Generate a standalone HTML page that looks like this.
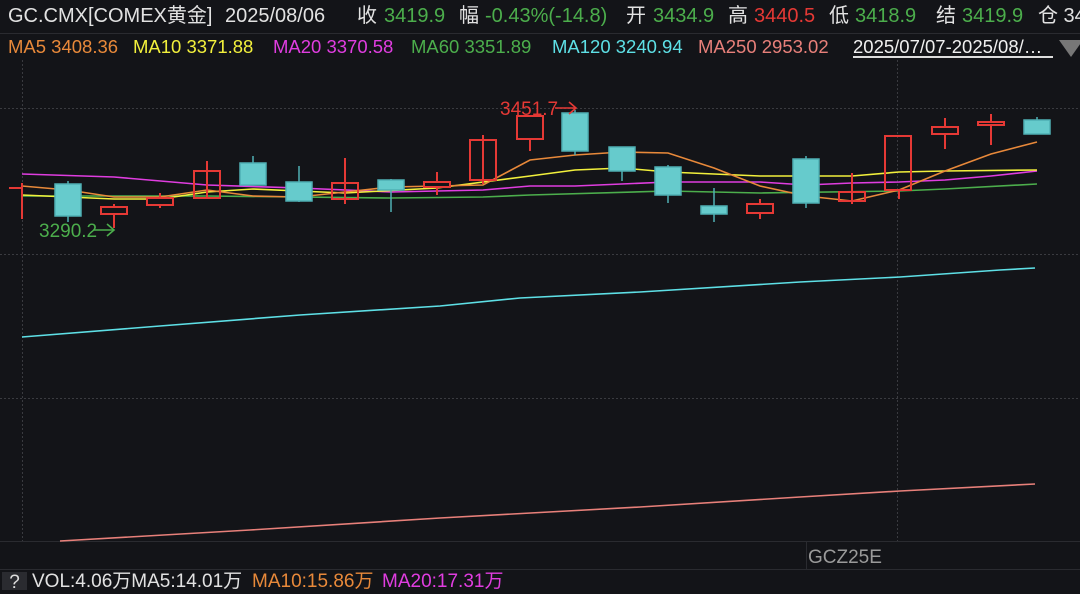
<!DOCTYPE html>
<html><head><meta charset="utf-8"><style>
html,body{margin:0;padding:0;background:#131418;width:1080px;height:588px;overflow:hidden;font-family:"Liberation Sans","Noto Sans CJK SC",sans-serif;}
.t{position:absolute;white-space:nowrap;font-size:20px;line-height:22px;}
.h{font-size:18.5px}
.w{color:#e2e2e2}.g{color:#4cae4c}.r{color:#e53935}.o{color:#e8893a}.y{color:#f2f03c}.m{color:#e03de0}.c{color:#5ee0e6}.s{color:#e8807a}
</style></head><body>
<div class="t w" style="left:8px;top:5px">GC.CMX[COMEX黄金]</div>
<div class="t w" style="left:225px;top:5px">2025/08/06</div>
<div class="t w" style="left:357px;top:5px">收</div><div class="t g" style="left:384px;top:5px">3419.9</div>
<div class="t w" style="left:459px;top:5px">幅</div><div class="t g" style="left:485px;top:5px">-0.43%(-14.8)</div>
<div class="t w" style="left:626px;top:5px">开</div><div class="t g" style="left:653px;top:5px">3434.9</div>
<div class="t w" style="left:728px;top:5px">高</div><div class="t r" style="left:754px;top:5px">3440.5</div>
<div class="t w" style="left:829px;top:5px">低</div><div class="t g" style="left:855px;top:5px">3418.9</div>
<div class="t w" style="left:936px;top:5px">结</div><div class="t g" style="left:962px;top:5px">3419.9</div>
<div class="t w" style="left:1038px;top:5px">仓 34</div>
<div style="position:absolute;left:0;top:33px;width:1080px;height:1px;background:#2a2b30"></div>
<div class="t h o" style="left:8px;top:36px">MA5 3408.36</div>
<div class="t h y" style="left:133px;top:36px">MA10 3371.88</div>
<div class="t h m" style="left:273px;top:36px">MA20 3370.58</div>
<div class="t h g" style="left:411px;top:36px">MA60 3351.89</div>
<div class="t h c" style="left:552px;top:36px">MA120 3240.94</div>
<div class="t h s" style="left:698px;top:36px">MA250 2953.02</div>
<div class="t h w" style="left:853px;top:36px;color:#f0f0f0">2025/07/07-2025/08/…</div>
<div style="position:absolute;left:853px;top:56px;width:200px;height:2px;background:#ddd"></div>
<div style="position:absolute;left:1059px;top:40px;width:0;height:0;border-left:12px solid transparent;border-right:12px solid transparent;border-top:17px solid #777"></div>

<svg style="position:absolute;left:0;top:0" width="1080" height="588">
<g stroke="#3a3b40" stroke-width="1" stroke-dasharray="2,2">
<line x1="0" y1="108.5" x2="1080" y2="108.5"/><line x1="0" y1="254.5" x2="1080" y2="254.5"/><line x1="0" y1="398.5" x2="1080" y2="398.5"/>
<line x1="22.5" y1="60" x2="22.5" y2="541"/><line x1="897.5" y1="60" x2="897.5" y2="541"/>
</g>
<line x1="0" y1="541.5" x2="1080" y2="541.5" stroke="#2a2b30"/>
<line x1="0" y1="569.5" x2="1080" y2="569.5" stroke="#2a2b30"/>
<line x1="806.5" y1="541" x2="806.5" y2="569" stroke="#2a2b30"/>
<g fill="none" stroke-width="1.6">
<polyline stroke="#5ee0e6" points="22,337 160,326 300,315 440,306 520,298 640,292 800,282 900,277 1000,270 1035,268"/>
<polyline stroke="#e8807a" points="60,541 250,530 440,518 640,507 800,497 900,491 1035,484"/>
<polyline stroke="#4cae4c" points="22,196 207,196 391,198 483,197 530,195 668,191 760,193 899,191 945,189 1037,184"/>
<polyline stroke="#e03de0" points="22,174 114,177 207,185 299,188 391,192 483,190 530,186 575,186 668,182 760,182 806,185 852,183 899,182 945,180 991,176 1037,171"/>
<polyline stroke="#f2f03c" points="22,195 114,199 160,199 207,192 253,189 345,193 437,188 530,176 575,170 622,168 668,172 714,174 760,176 806,176 852,176 899,172 945,171 1037,170"/>
<polyline stroke="#e8893a" points="22,186 68,190 114,197 160,197 207,190 253,196 299,197 345,192 391,187 437,186 483,185 530,160 575,155 622,152 668,153 714,168 760,186 806,196 852,201 899,190 945,171 991,154 1037,142"/>
</g>
<g stroke="#e53935" stroke-width="2" fill="none">
<line x1="9" y1="188" x2="22" y2="188"/><line x1="22" y1="183" x2="22" y2="219"/>
<line x1="114" y1="204" x2="114" y2="228"/><rect x="101" y="207" width="26" height="7" fill="#131418"/>
<line x1="160" y1="193" x2="160" y2="208"/><rect x="147" y="198" width="26" height="7" fill="#131418"/>
<line x1="207" y1="161" x2="207" y2="199"/><rect x="194" y="171" width="26" height="27" fill="none"/>
<line x1="345" y1="158" x2="345" y2="204"/><rect x="332" y="183" width="26" height="16"/>
<line x1="437" y1="172" x2="437" y2="195"/><rect x="424" y="182" width="26" height="5" fill="#131418"/>
<line x1="483" y1="135" x2="483" y2="184"/><rect x="470" y="140" width="26" height="40"/>
<line x1="530" y1="139" x2="530" y2="151"/><rect x="517" y="116" width="26" height="23"/>
<line x1="760" y1="199" x2="760" y2="219"/><rect x="747" y="204" width="26" height="9" fill="#131418"/>
<line x1="852" y1="173" x2="852" y2="204"/><rect x="839" y="192" width="26" height="9"/>
<line x1="899" y1="190" x2="899" y2="199"/><rect x="885" y="136" width="26" height="54"/>
<line x1="945" y1="118" x2="945" y2="149"/><rect x="932" y="127" width="26" height="7" fill="#131418"/>
<line x1="991" y1="114" x2="991" y2="145"/><rect x="978" y="122" width="26" height="3" fill="#131418"/>
</g>
<g stroke="#4fb0b4" stroke-width="1.5" fill="#66cbcc">
<line x1="68" y1="181" x2="68" y2="222"/><rect x="55" y="184" width="26" height="32"/>
<line x1="253" y1="156" x2="253" y2="185"/><rect x="240" y="163" width="26" height="22"/>
<line x1="299" y1="166" x2="299" y2="202"/><rect x="286" y="182" width="26" height="19"/>
<line x1="391" y1="179" x2="391" y2="212"/><rect x="378" y="180" width="26" height="10"/>
<line x1="575" y1="110" x2="575" y2="155"/><rect x="562" y="113" width="26" height="38"/>
<line x1="622" y1="147" x2="622" y2="181"/><rect x="609" y="147" width="26" height="24"/>
<line x1="668" y1="165" x2="668" y2="203"/><rect x="655" y="167" width="26" height="28"/>
<line x1="714" y1="188" x2="714" y2="222"/><rect x="701" y="206" width="26" height="8"/>
<line x1="806" y1="156" x2="806" y2="208"/><rect x="793" y="159" width="26" height="44"/>
<line x1="1037" y1="117" x2="1037" y2="121"/><rect x="1024" y="120" width="26" height="14"/>
</g>
<text x="500" y="115" fill="#e53935" font-size="19" font-family="Liberation Sans, sans-serif">3451.7</text>
<g stroke="#e53935" stroke-width="1.6" fill="none"><line x1="555" y1="108" x2="576" y2="108"/><polyline points="569,102 576,108 569,114"/></g>
<text x="39" y="237" fill="#4cae4c" font-size="19" font-family="Liberation Sans, sans-serif">3290.2</text>
<g stroke="#4cae4c" stroke-width="1.6" fill="none"><line x1="94" y1="230" x2="114" y2="230"/><polyline points="107,224 114,230 107,236"/></g>
<text x="808" y="563" fill="#9a9a9a" font-size="19" font-family="Liberation Sans, sans-serif">GCZ25E</text>
</svg>
<div style="position:absolute;left:2px;top:572px;width:25px;height:18px;background:#2a2b30;color:#ddd;font-size:19px;text-align:center;line-height:22px">?</div>
<div class="t w" style="left:32px;top:571px;font-size:19px">VOL:4.06万MA5:14.01万</div>
<div class="t o" style="left:252px;top:571px;font-size:19px">MA10:15.86万</div>
<div class="t m" style="left:382px;top:571px;font-size:19px">MA20:17.31万</div>
</body></html>
